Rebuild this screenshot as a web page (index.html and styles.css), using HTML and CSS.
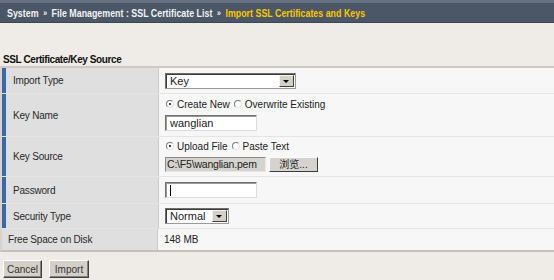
FILE: index.html
```html
<!DOCTYPE html>
<html lang="en">
<head>
    <meta charset="UTF-8">
    <title>Import SSL Certificates and Keys</title>
    <link rel="stylesheet" href="styles.css">
</head>
<body>

    <!-- Trilha de navegação -->
    <div class="breadcrumb">
        <div class="crumbs">
            <span class="crumb">System</span>
            <span class="sep">&raquo;</span>
            <span class="crumb">File Management : SSL Certificate List</span>
            <span class="sep">&raquo;</span>
            <span class="crumb current">Import SSL Certificates and Keys</span>
        </div>
    </div>

    <h2 class="section-title">SSL Certificate/Key Source</h2>

    <div class="form-table">
        <div class="row row-import">
            <div class="label">Import Type</div>
            <div class="value">
                <div class="select select-wide">
                    <span class="select-text">Key</span>
                    <span class="select-arrow"></span>
                </div>
            </div>
        </div>

        <div class="row row-keyname">
            <div class="label">Key Name</div>
            <div class="value stack">
                <div class="radios">
                    <span class="radio checked"></span><span class="radio-text">Create New</span>
                    <span class="radio"></span><span class="radio-text">Overwrite Existing</span>
                </div>
                <div class="textbox">wanglian</div>
            </div>
        </div>

        <div class="row row-source">
            <div class="label">Key Source</div>
            <div class="value stack">
                <div class="radios">
                    <span class="radio checked"></span><span class="radio-text">Upload File</span>
                    <span class="radio"></span><span class="radio-text">Paste Text</span>
                </div>
                <div class="file-input">
                    <div class="file-path">C:\F5\wanglian.pem</div>
                    <div class="browse">浏览...</div>
                </div>
            </div>
        </div>

        <div class="row row-password">
            <div class="label">Password</div>
            <div class="value">
                <div class="textbox"><span class="caret"></span></div>
            </div>
        </div>

        <div class="row row-security">
            <div class="label">Security Type</div>
            <div class="value">
                <div class="select select-small">
                    <span class="select-text">Normal</span>
                    <span class="select-arrow"></span>
                </div>
            </div>
        </div>

        <div class="row row-disk">
            <div class="label plain">Free Space on Disk</div>
            <div class="value">148 MB</div>
        </div>
    </div>

    <div class="actions">
        <button class="btn">Cancel</button>
        <button class="btn">Import</button>
    </div>

</body>
</html>
```

FILE: styles.css
```css
/* Estilos gerais */
body {
    margin: 0;
    padding: 0;
    background-color: #efebe6;
    font-family: "Liberation Sans", Arial, sans-serif;
    font-size: 10px;
    color: #222;
}

/* Trilha de navegação */
.breadcrumb {
    height: 19px;
    background-color: #4b5667;
    border-top: 3px solid #657183;
    border-bottom: 1px solid #3c4552;
    padding-left: 7px;
    display: flex;
    align-items: center;
    overflow: hidden;
}

/* fonte estreita (Arial Narrow) simulada */
.crumbs {
    display: flex;
    align-items: center;
    gap: 6px;
    white-space: nowrap;
    font-size: 11.5px;
    font-weight: bold;
    color: #f2f2f2;
    transform: scaleX(0.77);
    transform-origin: left center;
}

.crumbs .sep {
    font-size: 9px;
}

.crumbs .current {
    color: #f8c800;
}

/* Título da seção */
.section-title {
    margin: 30px 0 0;
    padding: 0 3px;
    height: 13px;
    line-height: 13px;
    font-size: 10px;
    font-weight: bold;
    letter-spacing: -0.4px;
    color: #111;
}

/* Tabela do formulário */
.form-table {
    border-top: 2px solid #cdc9c5;
    border-bottom: 2px solid #c4c0bc;
    border-left: 2px solid #d6d3d0;
    background-color: #f7f7f7;
}

.row {
    display: flex;
    border-top: 1px solid #e4e4e4;
}

.row:first-child {
    border-top: none;
}

.row-import { height: 25px; }
.row-keyname { height: 42px; }
.row-source { height: 39px; }
.row-password { height: 26px; }
.row-security { height: 24px; }
.row-disk { height: 21px; }

.label {
    width: 145px;
    flex-shrink: 0;
    display: flex;
    align-items: center;
    padding-left: 7px;
    background-color: #dfdfdf;
    border-left: 4px solid #3b69a6;
    border-right: 1px solid #cbcbcb;
    letter-spacing: -0.2px;
    color: #2a2a2a;
}

.label.plain {
    border-left: none;
    width: 149px;
    padding-left: 6px;
}

.value {
    display: flex;
    align-items: center;
    padding-left: 6px;
    color: #222;
}

.value.stack {
    flex-direction: column;
    align-items: flex-start;
    justify-content: center;
    gap: 4px;
}

/* Caixas de seleção no estilo clássico */
.select {
    height: 16px;
    display: flex;
    align-items: stretch;
    background-color: #fff;
    border: 1px solid #6e6e6e;
    border-color: #6e6e6e #9a9a9a #9a9a9a #6e6e6e;
    box-shadow: inset 1px 1px 0 #3c3c3c;
    box-sizing: border-box;
}

.select-wide { width: 131px; }
.select-small { width: 64px; }

.select-text {
    flex: 1;
    padding-left: 4px;
    line-height: 14px;
    font-size: 11px;
}

.select-arrow {
    width: 13px;
    margin: 1px;
    background-color: #d4d0c8;
    border: 1px solid;
    border-color: #f4f4f4 #404040 #404040 #f4f4f4;
    position: relative;
}

.select-arrow::after {
    content: "";
    position: absolute;
    left: 3px;
    top: 4px;
    border-left: 3px solid transparent;
    border-right: 3px solid transparent;
    border-top: 3px solid #000;
}

/* Botões de opção */
.radios {
    display: flex;
    align-items: center;
    font-size: 10px;
    line-height: 12px;
}

.radio {
    width: 6px;
    height: 6px;
    border-radius: 50%;
    border: 1px solid;
    border-color: #7b7b7b #e6e6e6 #e6e6e6 #7b7b7b;
    background-color: #fff;
    margin: 0 3px 2px 1px;
    position: relative;
}

.radio.checked::after {
    content: "";
    position: absolute;
    left: 2px;
    top: 2px;
    width: 2px;
    height: 2px;
    background-color: #000;
    border-radius: 50%;
}

.radio-text {
    margin-right: 3px;
}

/* Campos de texto */
.textbox {
    width: 92px;
    height: 16px;
    box-sizing: border-box;
    background-color: #fff;
    border: 1px solid;
    border-color: #707070 #dcdcdc #dcdcdc #707070;
    box-shadow: inset 1px 1px 0 #9a9a9a;
    padding-left: 4px;
    font-size: 11px;
    line-height: 14px;
    display: flex;
    align-items: center;
}

.caret {
    width: 1px;
    height: 11px;
    background-color: #000;
}

/* Campo de arquivo */
.file-input {
    display: flex;
    gap: 3px;
}

.file-path {
    width: 101px;
    height: 15px;
    box-sizing: border-box;
    background-color: #d6d3ce;
    border: 1px solid;
    border-color: #8a8a8a #e8e8e8 #e8e8e8 #8a8a8a;
    padding-left: 1px;
    font-size: 10.5px;
    line-height: 13px;
    letter-spacing: -0.2px;
}

.browse {
    width: 49px;
    height: 15px;
    box-sizing: border-box;
    background-color: #d6d3ce;
    border: 1px solid;
    border-color: #fafafa #3c3c3c #3c3c3c #fafafa;
    text-align: center;
    font-family: "Liberation Sans", "Noto Sans CJK SC", sans-serif;
    font-size: 10px;
    line-height: 13px;
}

/* Botões de ação */
.actions {
    display: flex;
    gap: 7px;
    padding: 8px 0 0 3px;
}

.btn {
    height: 18px;
    padding: 0;
    background-color: #d4d0c8;
    border: 1px solid;
    border-color: #ffffff #404040 #404040 #ffffff;
    box-shadow: inset -1px -1px 0 #808080;
    font-family: "Liberation Sans", Arial, sans-serif;
    font-size: 10px;
    color: #333;
}

.btn:first-child { width: 39px; }
.btn:last-child { width: 40px; }
```
